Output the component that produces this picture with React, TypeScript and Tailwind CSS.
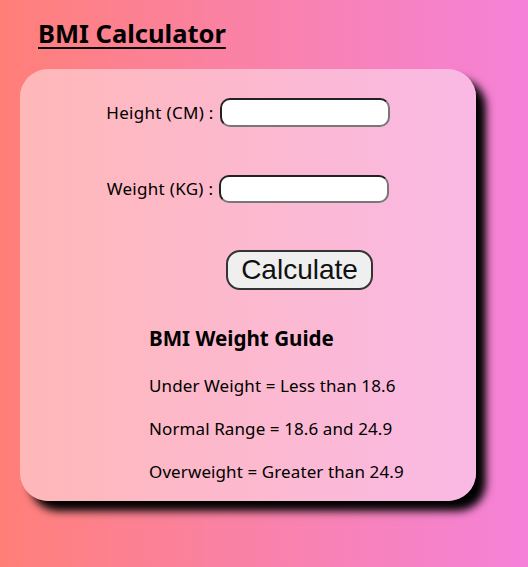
export default function App() {
  return (
    <div className="h-[567px] w-full bg-gradient-to-r from-[#ff7f77] to-[#f481d8] pt-[17px] font-['Noto_Sans',sans-serif] text-black">
      <h1 className="ml-[38px] text-[25.5px] font-bold leading-[32px] underline underline-offset-[4px]">
        BMI Calculator
      </h1>
      <div className="ml-[20px] mt-[20px] h-[432px] w-[456px] rounded-[28px] bg-gradient-to-r from-[#ffb8b8] to-[#f9b9e4] pt-[29px] shadow-[10px_10px_8px_#000]">
        <div className="flex h-[29px] items-center justify-center gap-[6px] text-[17px] tracking-[0.3px]">
          <label htmlFor="height">Height (CM) :</label>
          <input
            id="height"
            className="h-[29px] w-[170px] rounded-[10px] border-2 border-t-[#222] border-l-[#222] border-b-[#777] border-r-[#777] bg-white"
          />
        </div>
        <div className="mt-[48px] flex h-[28px] items-center justify-center gap-[6px] text-[17px] tracking-[0.3px]">
          <label htmlFor="weight">Weight (KG) :</label>
          <input
            id="weight"
            className="h-[28px] w-[170px] rounded-[10px] border-2 border-t-[#222] border-l-[#222] border-b-[#777] border-r-[#777] bg-white"
          />
        </div>
        <div className="mt-[47px] pl-[206px]">
          <button className="h-[40px] w-[147px] rounded-[14px] border-2 border-[#333] bg-[#efefef] font-['Liberation_Sans',sans-serif] text-[28px] leading-none text-[#111]">
            Calculate
          </button>
        </div>
        <div className="mt-[36px] pl-[129px]">
          <h3 className="text-[20.6px] font-bold leading-[24px]">BMI Weight Guide</h3>
          <p className="mt-[24px] text-[17px] leading-[24px] tracking-[0.1px]">Under Weight = Less than 18.6</p>
          <p className="mt-[19px] text-[17px] leading-[24px] tracking-[0.1px]">Normal Range = 18.6 and 24.9</p>
          <p className="mt-[19px] text-[17px] leading-[24px] tracking-[0.1px]">Overweight = Greater than 24.9</p>
        </div>
      </div>
    </div>
  );
}
